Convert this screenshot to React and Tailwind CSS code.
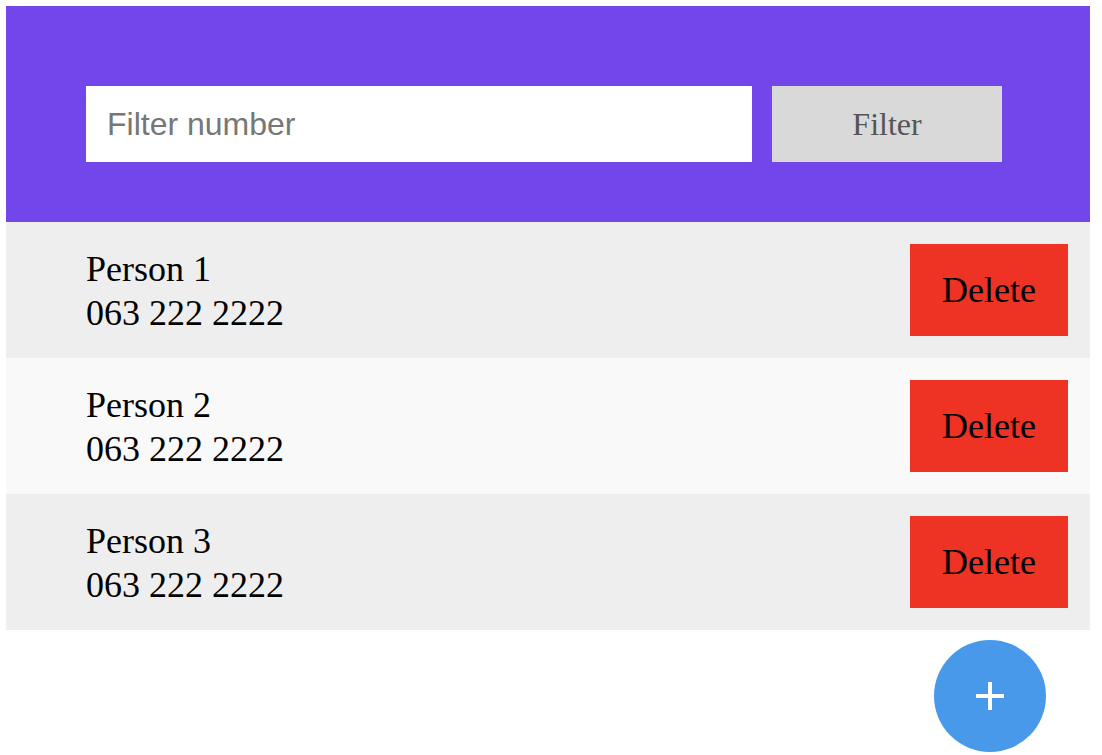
import React from 'react';

const people = [
    { name: 'Person 1', phone: '063 222 2222' },
    { name: 'Person 2', phone: '063 222 2222' },
    { name: 'Person 3', phone: '063 222 2222' },
];

export default function App() {
    return (
        <div className="w-[1084px] ml-[6px] pt-[6px] bg-white" style={{ fontFamily: '"Liberation Serif", "Times New Roman", serif' }}>
            {/* Header with filter */}
            <div className="bg-[#7246eb] h-[216px] pt-[80px] pl-[80px] flex gap-[20px]">
                <input
                    type="text"
                    placeholder="Filter number"
                    className="w-[666px] h-[76px] bg-white px-[21px] text-[32px] text-black placeholder:text-[#777] outline-none"
                    style={{ fontFamily: '"Liberation Sans", Arial, sans-serif' }}
                />
                <button className="w-[230px] h-[76px] bg-[#d9d9d9] text-[#555] text-[32px]">
                    Filter
                </button>
            </div>

            {/* Contacts list */}
            <div>
                {people.map((p, i) => (
                    <div
                        key={i}
                        className={`h-[136px] flex items-center justify-between pl-[80px] pr-[22px] ${i % 2 === 0 ? 'bg-[#eeeeee]' : 'bg-[#f9f9f9]'}`}
                    >
                        <div className="text-[36px] leading-[44px] text-black pt-[2px]">
                            <div>{p.name}</div>
                            <div>{p.phone}</div>
                        </div>
                        <button className="w-[158px] h-[92px] bg-[#ee3224] text-black text-[36px] flex items-center justify-center">
                            Delete
                        </button>
                    </div>
                ))}
            </div>

            {/* Add button */}
            <div className="flex justify-end pr-[44px] pt-[10px]">
                <button className="w-[112px] h-[112px] rounded-full bg-[#4899ea] flex items-center justify-center">
                    <svg width="28" height="28" viewBox="0 0 28 28">
                        <rect x="0" y="12" width="28" height="4" fill="white" />
                        <rect x="12" y="0" width="4" height="28" fill="white" />
                    </svg>
                </button>
            </div>
        </div>
    );
}
